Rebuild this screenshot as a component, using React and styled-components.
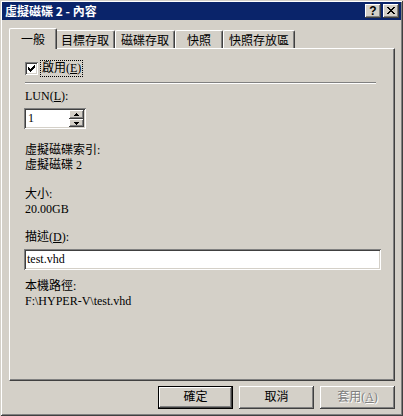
import React from 'react';
import styled, { createGlobalStyle, css } from 'styled-components';

const FACE = '#d4d0c8';

const GlobalStyle = createGlobalStyle`
  html, body {
    margin: 0;
    padding: 0;
    background: ${FACE};
  }
  body {
    font-family: "Liberation Serif", "Noto Sans CJK TC", serif;
    font-size: 12px;
    color: #000;
  }
  * { box-sizing: border-box; }
`;

// classic 3D bevels
const raised = css`
  background: ${FACE};
  box-shadow: inset -1px -1px #404040, inset 1px 1px #fff,
    inset -2px -2px #808080, inset 2px 2px ${FACE};
`;

const sunken = css`
  box-shadow: inset 1px 1px #808080, inset -1px -1px #fff,
    inset 2px 2px #404040, inset -2px -2px ${FACE};
`;

const Window = styled.div`
  width: 403px;
  height: 416px;
  display: flex;
  flex-direction: column;
  padding: 2px;
  background: ${FACE};
  box-shadow: inset 1px 1px ${FACE}, inset -1px -1px #404040,
    inset 2px 2px #fff, inset -2px -2px #808080;
`;

const TitleBar = styled.div`
  height: 18px;
  display: flex;
  align-items: center;
  padding: 0 2px 0 3px;
  background: #0a246a;
`;

const TitleText = styled.div`
  flex: 1;
  color: #fff;
  font-family: "Noto Sans CJK TC", "Liberation Sans", sans-serif;
  font-weight: bold;
  font-size: 12px;
  line-height: 18px;
  white-space: nowrap;
`;

const CaptionButton = styled.div`
  ${raised}
  width: 16px;
  height: 14px;
  margin-left: ${p => p.$gap || 0}px;
  display: flex;
  align-items: center;
  justify-content: center;
  font-family: "Liberation Sans", sans-serif;
  font-weight: bold;
  font-size: 12px;
  line-height: 12px;
  padding-bottom: 1px;
`;

const Body = styled.div`
  flex: 1;
  display: flex;
  flex-direction: column;
  padding: 8px 6px 0 7px;
`;

const TabStrip = styled.div`
  display: flex;
  align-items: flex-end;
  height: 20px;
  padding-left: 2px;
  position: relative;
  z-index: 1;
`;

const Tab = styled.div`
  min-width: 48px;
  height: ${p => (p.$active ? 21 : 18)}px;
  margin: 0 ${p => (p.$active ? -2 : 0)}px ${p => (p.$active ? -1 : 0)}px;
  padding: 0 5px ${p => (p.$active ? 2 : 0)}px;
  display: flex;
  align-items: center;
  justify-content: center;
  background: ${FACE};
  border-top: 1px solid #fff;
  border-left: 1px solid #fff;
  border-right: 1px solid #404040;
  border-radius: 2px 2px 0 0;
  box-shadow: inset -1px 0 #808080;
  position: relative;
  z-index: ${p => (p.$active ? 2 : 1)};
  font-family: "Noto Sans CJK TC", sans-serif;
  line-height: 15px;
  white-space: nowrap;
`;

const Panel = styled.div`
  height: 333px;
  display: flex;
  flex-direction: column;
  padding: 0 13px 0 15px;
  border-top: 1px solid #fff;
  border-left: 1px solid #fff;
  border-right: 1px solid #404040;
  border-bottom: 1px solid #404040;
  box-shadow: inset -1px -1px #808080;
`;

const CheckRow = styled.div`
  display: flex;
  align-items: center;
  height: 17px;
  margin-top: 11px;
`;

const CheckBox = styled.div`
  width: 13px;
  height: 13px;
  background: #fff;
  ${sunken}
  display: flex;
  align-items: center;
  justify-content: center;
`;

const FocusLabel = styled.span`
  margin-left: 2px;
  height: 17px;
  padding: 0 1px;
  border: 1px dotted #000;
  line-height: 15px;
`;

const Separator = styled.div`
  height: 2px;
  margin: 5px 5px 0 0;
  border-top: 1px solid #808080;
  border-bottom: 1px solid #fff;
`;

const Label = styled.div`
  line-height: 15px;
  margin-top: ${p => p.$gap || 0}px;
  white-space: nowrap;
`;

const SpinBox = styled.div`
  align-self: flex-start;
  width: 62px;
  height: 21px;
  margin: 4px 0 0 -1px;
  padding: 2px;
  display: flex;
  background: #fff;
  ${sunken}
`;

const SpinValue = styled.div`
  flex: 1;
  padding-left: 2px;
  line-height: 17px;
`;

const SpinButtons = styled.div`
  width: 15px;
  display: flex;
  flex-direction: column;
`;

const SpinButton = styled.div`
  ${raised}
  height: ${p => p.$h}px;
  display: flex;
  align-items: center;
  justify-content: center;
`;

const TextField = styled.div`
  height: 21px;
  margin: 4px 0 0 -1px;
  padding: 2px 3px;
  background: #fff;
  ${sunken}
  line-height: 17px;
`;

const ButtonRow = styled.div`
  display: flex;
  justify-content: flex-end;
  gap: 6px;
  margin-top: 5px;
`;

const PushButton = styled.div`
  width: 75px;
  height: 23px;
  display: flex;
  align-items: center;
  justify-content: center;
  ${raised}
  ${p => p.$default && css`
    box-shadow: inset 0 0 0 1px #000, inset -2px -2px #404040, inset 2px 2px #fff,
      inset -3px -3px #808080;
  `}
  color: ${p => (p.$disabled ? '#808080' : '#000')};
  text-shadow: ${p => (p.$disabled ? '1px 1px #fff' : 'none')};
  line-height: 15px;
  white-space: nowrap;
`;

const Arrow = ({ down }) => (
  <svg width="5" height="3" viewBox="0 0 5 3" shapeRendering="crispEdges">
    {down ? (
      <>
        <rect x="0" y="0" width="5" height="1" fill="#000" />
        <rect x="1" y="1" width="3" height="1" fill="#000" />
        <rect x="2" y="2" width="1" height="1" fill="#000" />
      </>
    ) : (
      <>
        <rect x="2" y="0" width="1" height="1" fill="#000" />
        <rect x="1" y="1" width="3" height="1" fill="#000" />
        <rect x="0" y="2" width="5" height="1" fill="#000" />
      </>
    )}
  </svg>
);

const Mn = ({ text, k }) => (
  <>
    {text}(<u>{k}</u>)
  </>
);

const tabs = ['一般', '目標存取', '磁碟存取', '快照', '快照存放區'];

export default function App() {
  return (
    <>
      <GlobalStyle />
      <Window>
        <TitleBar>
          <TitleText>虛擬磁碟 2 - 內容</TitleText>
          <CaptionButton>?</CaptionButton>
          <CaptionButton $gap={2}>
            <svg width="8" height="7" viewBox="0 0 8 7" shapeRendering="crispEdges">
              <path d="M0 0h2v1h-2zM6 0h2v1h-2zM1 1h2v1h-2zM5 1h2v1h-2zM2 2h4v1h-4zM3 3h2v1h-2zM2 4h4v1h-4zM1 5h2v1h-2zM5 5h2v1h-2zM0 6h2v1h-2zM6 6h2v1h-2z" fill="#000" />
            </svg>
          </CaptionButton>
        </TitleBar>

        <Body>
          <TabStrip>
            {tabs.map((t, i) => (
              <Tab key={t} $active={i === 0}>{t}</Tab>
            ))}
          </TabStrip>

          <Panel>
            <CheckRow>
              <CheckBox>
                <svg width="7" height="7" viewBox="0 0 7 7" shapeRendering="crispEdges">
                  <path d="M6 0h1v3h-1zM5 1h1v3h-1zM4 2h1v3h-1zM3 3h1v3h-1zM2 4h1v3h-1zM1 3h1v3h-1zM0 2h1v3h-1z" fill="#000" />
                </svg>
              </CheckBox>
              <FocusLabel><Mn text="啟用" k="E" /></FocusLabel>
            </CheckRow>
            <Separator />

            <Label $gap={5}><Mn text="LUN" k="L" />:</Label>
            <SpinBox>
              <SpinValue>1</SpinValue>
              <SpinButtons>
                <SpinButton $h={9}><Arrow /></SpinButton>
                <SpinButton $h={8}><Arrow down /></SpinButton>
              </SpinButtons>
            </SpinBox>

            <Label $gap={14}>虛擬磁碟索引:</Label>
            <Label>虛擬磁碟 2</Label>

            <Label $gap={14}>大小:</Label>
            <Label>20.00GB</Label>

            <Label $gap={13}><Mn text="描述" k="D" />:</Label>
            <TextField>test.vhd</TextField>

            <Label $gap={9}>本機路徑:</Label>
            <Label>F:\HYPER-V\test.vhd</Label>
          </Panel>

          <ButtonRow>
            <PushButton $default>確定</PushButton>
            <PushButton>取消</PushButton>
            <PushButton $disabled><Mn text="套用" k="A" /></PushButton>
          </ButtonRow>
        </Body>
      </Window>
    </>
  );
}
